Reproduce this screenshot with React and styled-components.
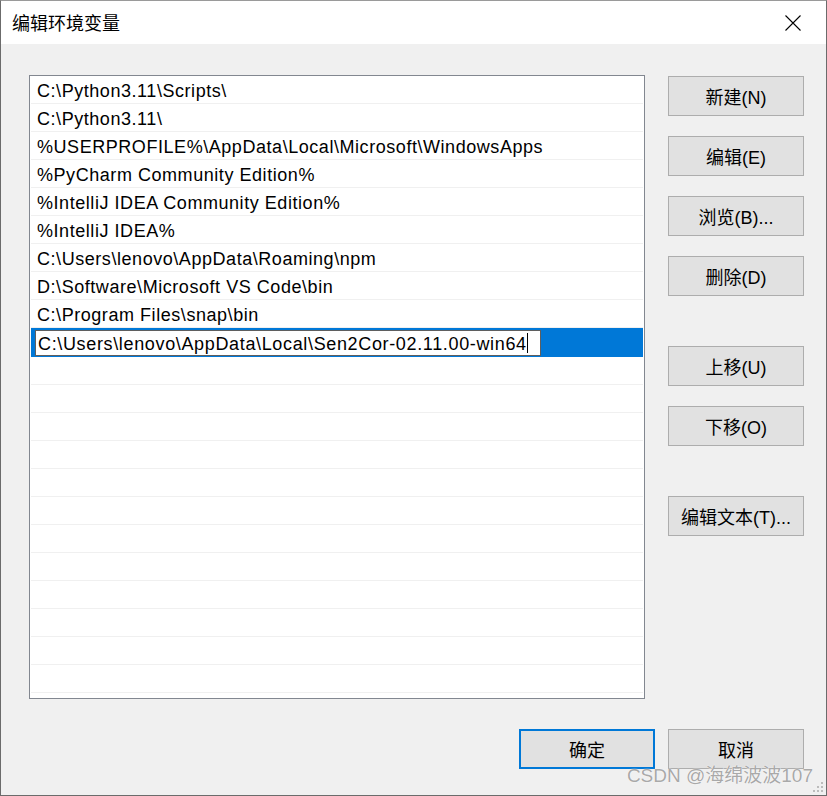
import React from 'react'
import styled, { createGlobalStyle } from 'styled-components'

const GlobalStyle = createGlobalStyle`
  html, body { margin: 0; padding: 0; background: #f0f0f0; }
  body { font-family: "Liberation Sans", "Noto Sans CJK SC", sans-serif; }
`

const paths = [
  'C:\\Python3.11\\Scripts\\',
  'C:\\Python3.11\\',
  '%USERPROFILE%\\AppData\\Local\\Microsoft\\WindowsApps',
  '%PyCharm Community Edition%',
  '%IntelliJ IDEA Community Edition%',
  '%IntelliJ IDEA%',
  'C:\\Users\\lenovo\\AppData\\Roaming\\npm',
  'D:\\Software\\Microsoft VS Code\\bin',
  'C:\\Program Files\\snap\\bin',
]
const editing = 'C:\\Users\\lenovo\\AppData\\Local\\Sen2Cor-02.11.00-win64'

const Window = styled.div`
  position: relative;
  width: 827px;
  height: 796px;
  box-sizing: border-box;
  border: 1px solid #6b6b6b;
  border-top-color: #9a9a9a;
  background: #f0f0f0;
  display: flex;
  flex-direction: column;
  overflow: hidden;
`

const TitleBar = styled.div`
  height: 43px;
  background: #fff;
  display: flex;
  align-items: center;
  justify-content: space-between;
  padding: 0 0 0 11px;
`

const Title = styled.span`
  font-family: "Noto Sans CJK SC", sans-serif;
  font-size: 18px;
  color: #000;
  margin-top: -2px;
`

const Close = styled.div`
  width: 56px;
  height: 43px;
  display: flex;
  align-items: center;
  justify-content: center;
  margin-right: 5px;
`

const Body = styled.div`
  flex: 1;
  display: flex;
  flex-direction: column;
  padding: 31px 22px 0 28px;
`

const Main = styled.div`
  display: flex;
  gap: 23px;
`

const List = styled.div`
  width: 616px;
  height: 624px;
  box-sizing: border-box;
  border: 1px solid #828790;
  background: #fff;
  display: flex;
  flex-direction: column;
  overflow: hidden;
`

const Row = styled.div`
  flex: 0 0 28px;
  box-sizing: border-box;
  margin: 0 1px;
  border-bottom: 1px solid ${p => (p.$selected ? '#0078d7' : '#f0f0f0')};
  background: ${p => (p.$selected ? '#0078d7' : '#fff')};
  display: flex;
  align-items: center;
  padding: ${p => (p.$selected ? '0' : '3px')} 0 0 6px;
  font-size: 18px;
  letter-spacing: 0.55px;
  color: #000;
  white-space: nowrap;
`

const EditBox = styled.div`
  width: 506px;
  height: 26px;
  box-sizing: border-box;
  margin: 2px 0 0 -2px;
  border: 1px solid #5f5f5f;
  background: #fff;
  display: flex;
  align-items: center;
  padding: 2px 0 0 2px;
  font-size: 18px;
  letter-spacing: 0.65px;
  color: #000;
  white-space: nowrap;
`

const Caret = styled.span`
  display: inline-block;
  width: 1px;
  height: 20px;
  background: #000;
  margin: -2px 0 0 0;
`

const Side = styled.div`
  display: flex;
  flex-direction: column;
  padding-top: 1px;
`

const Button = styled.button`
  width: 136px;
  height: 40px;
  box-sizing: border-box;
  border: ${p => (p.$primary ? '2px solid #0078d7' : '1px solid #adadad')};
  background: #e1e1e1;
  font-family: "Liberation Sans", "Noto Sans CJK SC", sans-serif;
  font-size: 18px;
  color: #000;
  padding: 0;
  margin-top: ${p => p.$gap || 0}px;
`

const Footer = styled.div`
  display: flex;
  justify-content: flex-end;
  gap: 13px;
  margin-top: 30px;
`

const Watermark = styled.div`
  position: absolute;
  right: 13px;
  bottom: 8px;
  font-family: "Liberation Sans", "Noto Sans CJK SC", sans-serif;
  font-size: 19px;
  color: #a9a9a9;
  text-shadow: 0 0 1px #fff, 0 0 1px #fff;
`

const Grip = styled.svg`
  position: absolute;
  right: 3px;
  bottom: 3px;
`

export default function App() {
  return (
    <>
      <GlobalStyle />
      <Window>
        <TitleBar>
          <Title>编辑环境变量</Title>
          <Close>
            <svg width="16" height="16" viewBox="0 0 16 16">
              <path d="M0.5 0.5 L15.5 15.5 M15.5 0.5 L0.5 15.5" stroke="#000" strokeWidth="1.1" />
            </svg>
          </Close>
        </TitleBar>
        <Body>
          <Main>
            <List>
              {paths.map(p => (
                <Row key={p}>{p}</Row>
              ))}
              <Row $selected>
                <EditBox>
                  {editing}
                  <Caret />
                </EditBox>
              </Row>
              {Array.from({ length: 13 }).map((_, i) => (
                <Row key={'e' + i} />
              ))}
            </List>
            <Side>
              <Button>新建(N)</Button>
              <Button $gap={20}>编辑(E)</Button>
              <Button $gap={20}>浏览(B)...</Button>
              <Button $gap={20}>删除(D)</Button>
              <Button $gap={50}>上移(U)</Button>
              <Button $gap={20}>下移(O)</Button>
              <Button $gap={50}>编辑文本(T)...</Button>
            </Side>
          </Main>
          <Footer>
            <Button $primary>确定</Button>
            <Button>取消</Button>
          </Footer>
        </Body>
        <Watermark>CSDN @海绵波波107</Watermark>
        <Grip width="10" height="10" viewBox="0 0 10 10">
          {[[8, 0], [8, 4], [4, 4], [8, 8], [4, 8], [0, 8]].map(([x, y]) => (
            <rect key={x + '-' + y} x={x} y={y} width="2" height="2" fill="#bcbcbc" />
          ))}
        </Grip>
      </Window>
    </>
  )
}
